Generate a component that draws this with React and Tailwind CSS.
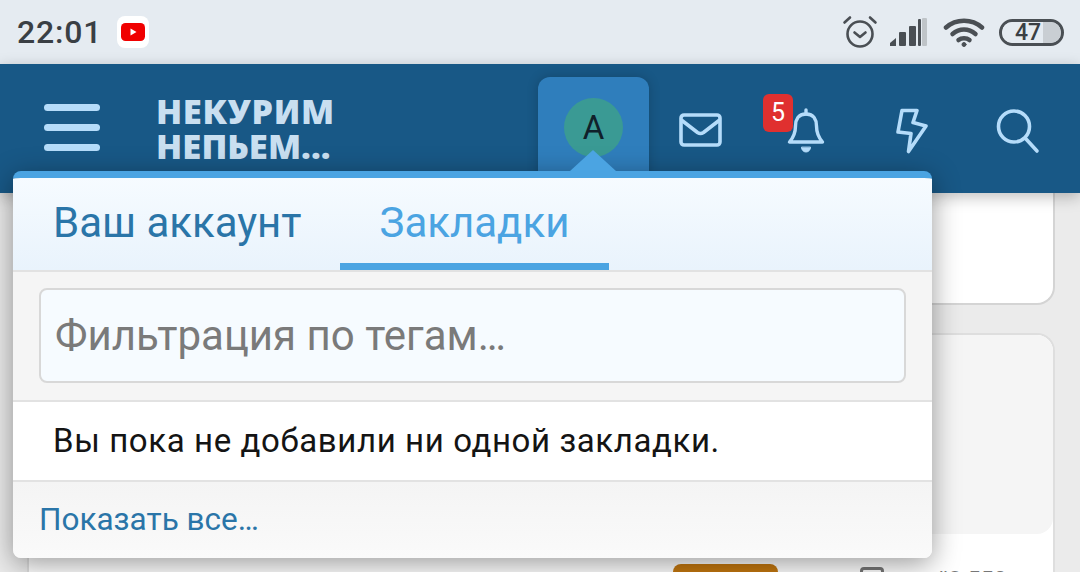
const roboto = "font-['Roboto',sans-serif]";

const AlarmIcon = () => (
  <svg width="36" height="34" viewBox="0 0 36 34" fill="none" stroke="#4a4f54" strokeWidth="2.6" strokeLinecap="round" strokeLinejoin="round">
    <circle cx="18" cy="19" r="12.5" />
    <path d="M12.5 17.5 18 22l5.500-4.500" />
    <path d="M2.500 7.500 8 2.500" />
    <path d="M33.500 7.500 28 2.500" />
  </svg>
);

const SignalIcon = () => (
  <svg width="40" height="30" viewBox="0 0 40 30">
    <path d="M1 29v-3l6-5v8z" fill="#4a4f54" />
    <rect x="10" y="15" width="7" height="14" rx="1" fill="#4a4f54" />
    <rect x="20" y="9" width="7" height="20" rx="1" fill="#4a4f54" />
    <rect x="29" y="2" width="3" height="27" rx="1" fill="#4a4f54" />
    <rect x="33" y="1" width="5" height="28" rx="1" fill="#bfc4c8" />
  </svg>
);

const WifiIcon = () => (
  <svg width="42" height="32" viewBox="0 0 42 32" fill="none" stroke="#4a4f54" strokeWidth="4.500" strokeLinecap="round">
    <path d="M3 11.500C13 2.500 29 2.500 39 11.500" />
    <path d="M9.500 18C16.500 12 25.500 12 32.500 18" />
    <path d="M15.500 24C18.500 21.500 23.500 21.500 26.500 24" />
    <circle cx="21" cy="28.500" r="2" fill="#4a4f54" strokeWidth="1" />
  </svg>
);

const YoutubeIcon = () => (
  <div className="flex h-8 w-8 items-center justify-center rounded-lg bg-white">
    <svg width="24" height="18" viewBox="0 0 24 18">
      <rect width="24" height="18" rx="4.500" fill="#f00000" />
      <path d="M9.500 5.500v7l6-3.500z" fill="#fff" />
    </svg>
  </div>
);

const MailIcon = () => (
  <svg width="43" height="34" viewBox="0 0 43 34" fill="none" stroke="#b5dcfa" strokeWidth="3.600" strokeLinejoin="round" strokeLinecap="round">
    <rect x="2" y="2" width="39" height="30" rx="3" />
    <path d="M3 7.500 18.500 19.500Q21.500 21.500 24.500 19.500L40 7.500" />
  </svg>
);

const BellIcon = () => (
  <svg width="38" height="46" viewBox="0 0 38 46" fill="none" stroke="#b5dcfa" strokeWidth="3.400" strokeLinejoin="round" strokeLinecap="round">
    <path d="M19 6C11 6 8.500 12 8.500 18 8.500 26 6 30 2.500 34H35.500C32 30 29.500 26 29.500 18 29.500 12 27 6 19 6z" />
    <path d="M19 2v4" />
    <path d="M14.500 39.500a4.500 4.500 0 0 0 9 0z" fill="#b5dcfa" strokeWidth="1" />
  </svg>
);

const BoltIcon = () => (
  <svg width="34" height="46" viewBox="0 0 34 46" fill="none" stroke="#b5dcfa" strokeWidth="3.600" strokeLinejoin="round" strokeLinecap="round">
    <path d="M6 2.500h15l-4 12 13 3.500L12.500 43.500l2.500-18L2 24z" />
  </svg>
);

const SearchIcon = () => (
  <svg width="44" height="47" viewBox="0 0 44 47" fill="none" stroke="#b5dcfa" strokeWidth="3.600" strokeLinecap="round">
    <circle cx="18" cy="19.500" r="15.500" />
    <path d="M30 32 41 44" />
  </svg>
);

const StatusBar = () => (
  <div className={`flex h-16 shrink-0 items-center bg-[#e5ebf1] pl-[17px] pr-4 ${roboto}`}>
    <span className="mr-[15px] text-[32px] font-medium tracking-[0.8px] text-[#3a3f44]">22:01</span>
    <YoutubeIcon />
    <div className="ml-auto flex items-center">
      <AlarmIcon />
      <div className="ml-[11px]"><SignalIcon /></div>
      <div className="ml-[14px]"><WifiIcon /></div>
      <div className="relative ml-[14px] flex h-[27px] w-[65px] items-center overflow-hidden rounded-full border-[3px] border-[#4a4f54]">
        <div className="h-full w-[41px] bg-[#e5ebf1]" />
        <div className="h-full flex-1 bg-[#c9ced3]" />
        <span className="absolute left-[13px] text-[23px] font-medium leading-none text-[#3a3f44]">47</span>
      </div>
    </div>
  </div>
);

const Header = () => (
  <header className="z-10 flex h-[129px] shrink-0 items-start bg-[#185886] shadow-[0_4px_14px_rgba(0,0,0,0.25)]">
    <div className="ml-11 mt-10 flex w-14 flex-col gap-[13px]">
      <div className="h-[7px] rounded-sm bg-[#b5dcfa]" />
      <div className="h-[7px] rounded-sm bg-[#b5dcfa]" />
      <div className="h-[7px] rounded-sm bg-[#b5dcfa]" />
    </div>
    <div className="ml-14 mt-[30px] w-[177px] whitespace-nowrap text-[34px] font-black leading-[35px] text-[#c9dff0] font-['Noto_Sans',sans-serif]">
      <div className="tracking-[0.6px]">НЕКУРИМ</div>
      <div>НЕПЬЕМ...</div>
    </div>
    <div className="relative ml-[205px] mt-[13px] flex h-[116px] w-[111px] justify-center rounded-t-xl bg-[#2f7ebc] pt-[21px] shadow-[0_0_12px_rgba(0,0,0,0.2)]">
      <div className={`flex h-[59px] w-[59px] items-center justify-center rounded-full bg-[#3a9a94] text-[33px] text-[#10202a] ${roboto}`}>A</div>
    </div>
    <div className="ml-[30px] mt-[49px]"><MailIcon /></div>
    <div className="relative ml-[65px] mt-11">
      <BellIcon />
      <span className={`absolute -left-6 -top-[14px] flex h-[38px] w-[30px] items-center justify-center rounded-md bg-[#e0302f] text-[25px] text-white ${roboto}`}>5</span>
    </div>
    <div className="ml-[71px] mt-11"><BoltIcon /></div>
    <div className="ml-[66px] mt-[43px]"><SearchIcon /></div>
  </header>
);

// page behind the popup
const Page = () => (
  <main className="flex flex-1 flex-col gap-7 overflow-hidden pl-[27px] pr-[25px]">
    <div className="h-[112px] shrink-0 rounded-b-[18px] border-2 border-t-0 border-[#d4d4d4] bg-white" />
    <div className="flex h-[260px] shrink-0 flex-col rounded-t-[18px] border-2 border-b-0 border-[#dedede] bg-white">
      <div className="h-[199px] shrink-0 rounded-2xl bg-[#f5f5f5]" />
      <div className={`mt-[30px] flex items-start pl-[644px] text-[22px] leading-none text-[#777] ${roboto}`}>
        <div className="h-9 w-[105px] rounded-t-lg bg-[#c4780f]" />
        <div className="ml-[82px] mt-[3px] h-9 w-6 rounded-t border-[3px] border-[#777]" />
        <span className="ml-[51px] mt-[5px] whitespace-nowrap font-medium tracking-wide">#3 550</span>
      </div>
    </div>
  </main>
);

const Popup = () => (
  <div className={`absolute left-[13px] top-[171px] z-20 w-[919px] ${roboto}`}>
    <div className="absolute -top-[21px] left-[557px] h-0 w-0 border-x-[23px] border-b-[21px] border-x-transparent border-b-[#4ba4e2]" />
    <div className="overflow-hidden rounded-lg border-t-[7px] border-[#4ba4e2] shadow-[0_6px_28px_rgba(0,0,0,0.4)]">
      <div className="flex h-[94px] items-stretch border-b-2 border-[#e2e2e2] bg-gradient-to-b from-[#f6fbff] to-[#e9f3fc] text-[42px]">
        <div className="flex items-center pb-[4px] pl-10 pr-[38px] text-[#2a75a8]">Ваш аккаунт</div>
        <div className="flex items-center border-b-[7px] border-[#4ba4e2] px-10 pt-[3px] text-[#4ba4e2]">Закладки</div>
      </div>
      <div className="border-b-2 border-[#e2e2e2] bg-[#f5f5f5] px-[26px] pb-[17px] pt-4">
        <div className="flex h-[95px] items-center rounded-lg border-2 border-[#d8d8d8] bg-[#f6fbff] px-[14px] text-[42px] text-[#7a7a7a]">
          Фильтрация по тегам…
        </div>
      </div>
      <div className="flex h-20 items-center border-b-2 border-[#e2e2e2] bg-white pl-10 text-[33px] tracking-[0.6px] text-[#141414]">
        Вы пока не добавили ни одной закладки.
      </div>
      <div className="flex h-[76px] items-center bg-gradient-to-b from-[#f4f4f4] to-[#fafafa] pl-[26px] text-[31.500px] text-[#2a75a8]">
        Показать все…
      </div>
    </div>
  </div>
);

export default function App() {
  return (
    <div className="relative flex h-[572px] w-[1080px] flex-col overflow-hidden bg-[#ebebeb]">
      <StatusBar />
      <Header />
      <Page />
      <Popup />
    </div>
  );
}
